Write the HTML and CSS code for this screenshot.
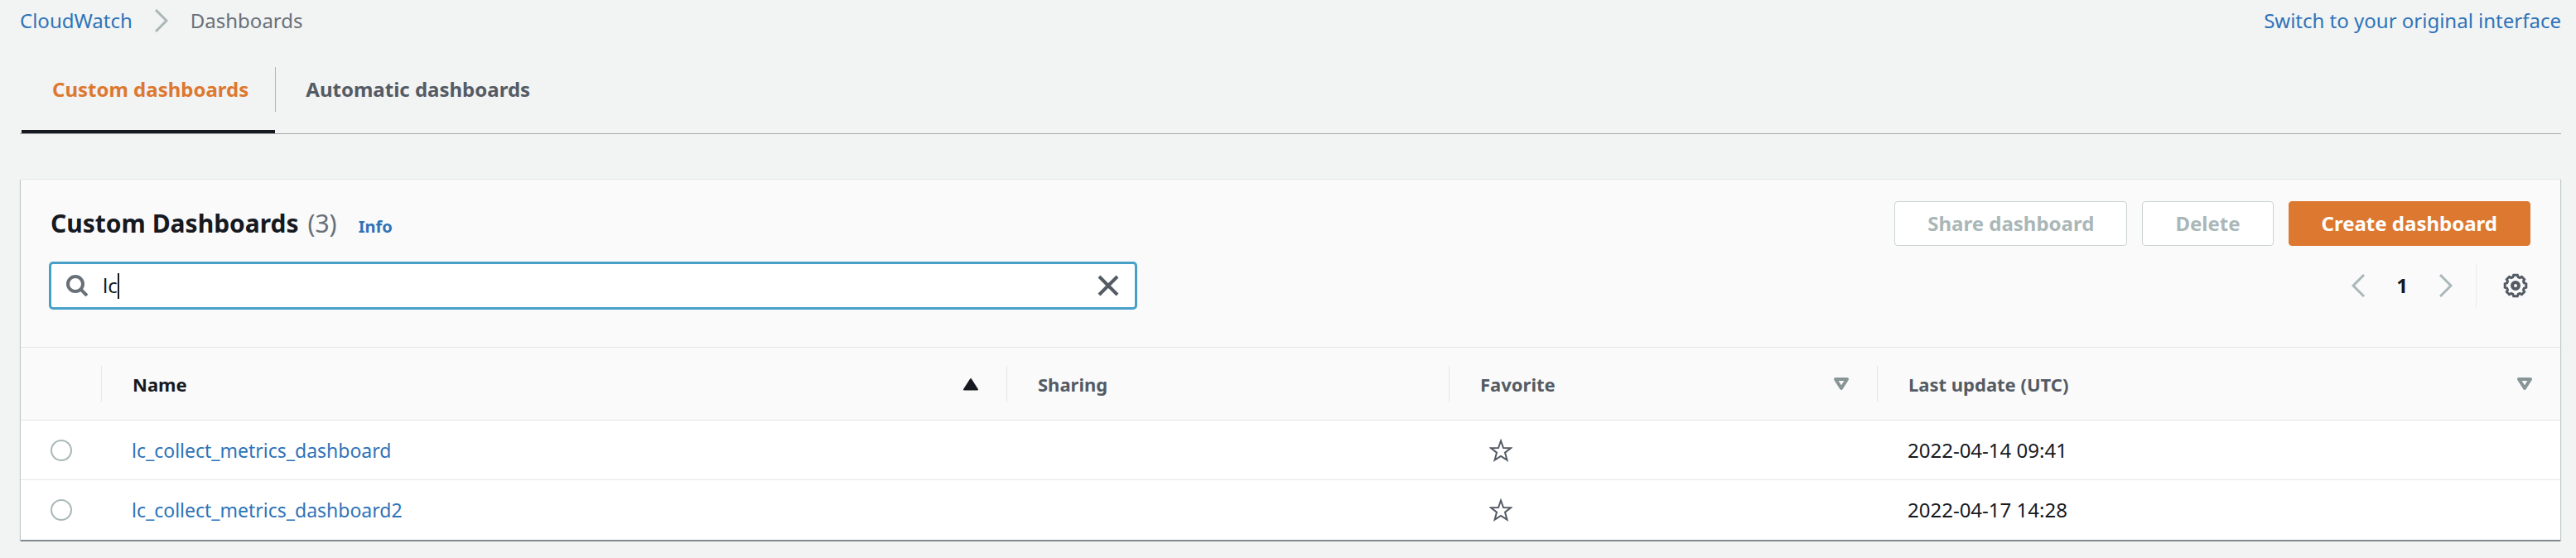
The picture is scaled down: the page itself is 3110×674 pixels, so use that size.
FILE: index.html
```html
<!DOCTYPE html>
<html lang="en">
<head>
<meta charset="utf-8">
<title>CloudWatch Dashboards</title>
<link rel="stylesheet" href="styles.css">
</head>
<body>
<header class="topbar">
  <nav class="breadcrumbs" aria-label="Breadcrumbs">
    <a class="link" href="#">CloudWatch</a>
    <svg class="chevron" viewBox="0 0 16 28" aria-hidden="true"><path d="M1 1l13 13L1 27"/></svg>
    <span class="current">Dashboards</span>
  </nav>
  <a class="link" href="#">Switch to your original interface</a>
</header>
<div class="tabs" role="tablist">
  <button class="tab active" role="tab" aria-selected="true">Custom dashboards</button>
  <button class="tab" role="tab" aria-selected="false">Automatic dashboards</button>
</div>
<main class="panel">
  <div class="panel-head">
    <div class="title-row">
      <div class="heading">
        <h1 class="title">Custom Dashboards <span class="count">(3)</span></h1>
        <a class="info" href="#">Info</a>
      </div>
      <div class="actions">
        <button class="btn" disabled>Share dashboard</button>
        <button class="btn" disabled>Delete</button>
        <button class="btn primary">Create dashboard</button>
      </div>
    </div>
    <div class="filter-row">
      <div class="search">
        <svg class="search-icon" viewBox="0 0 26 26" aria-hidden="true"><circle cx="11" cy="11" r="9"/><path d="M17 17l8 8"/></svg>
        <input class="search-input" type="text" aria-label="Find dashboards" value="lc">
        <span class="caret"></span>
        <button class="icon-btn" aria-label="Clear"><svg class="clear-icon" viewBox="0 0 26 26"><path d="M2 2l22 22M24 2L2 24"/></svg></button>
      </div>
      <div class="paging">
        <button class="icon-btn" aria-label="Previous page"><svg class="chevron" viewBox="0 0 16 28"><path d="M15 1L2 14l13 13"/></svg></button>
        <button class="page">1</button>
        <button class="icon-btn" aria-label="Next page"><svg class="chevron" viewBox="0 0 16 28"><path d="M1 1l13 13L1 27"/></svg></button>
        <span class="rule"></span>
        <button class="icon-btn" aria-label="Preferences"><svg class="gear" viewBox="0 0 30 30"><path d="M12.700 2.200h4.600L18.200 4.700 20.100 5.500 22.500 4.300 25.700 7.500 24.500 9.900 25.300 11.800 27.800 12.700V17.300L25.300 18.200 24.500 20.100 25.700 22.500 22.500 25.700 20.100 24.500 18.200 25.300 17.300 27.800H12.700L11.800 25.300 9.900 24.500 7.500 25.700 4.300 22.500 5.500 20.100 4.700 18.200 2.200 17.300V12.700L4.700 11.800 5.500 9.900 4.300 7.500 7.500 4.300 9.900 5.500 11.800 4.700z"/><circle class="hub" cx="15" cy="15" r="4"/></svg></button>
      </div>
    </div>
  </div>
  <table class="grid">
    <colgroup><col class="c-pick"><col class="c-name"><col class="c-share"><col class="c-fav"><col class="c-date"></colgroup>
    <thead>
      <tr>
        <th aria-label="Selection"><div class="cell"></div></th>
        <th class="sorted"><div class="cell">Name<svg class="sort" viewBox="0 0 20 16"><path class="solid" d="M10 2l8 12.500H2z"/></svg></div></th>
        <th><div class="cell">Sharing</div></th>
        <th><div class="cell">Favorite<svg class="sort" viewBox="0 0 20 16"><path d="M3 2h14l-7 11z"/></svg></div></th>
        <th><div class="cell">Last update (UTC)<svg class="sort" viewBox="0 0 20 16"><path d="M3 2h14l-7 11z"/></svg></div></th>
      </tr>
    </thead>
    <tbody>
      <tr>
        <td><input class="radio" type="radio" name="pick" aria-label="Select lc_collect_metrics_dashboard"></td>
        <td><a class="link" href="#">lc_collect_metrics_dashboard</a></td>
        <td></td>
        <td><button class="icon-btn fav" aria-label="Favorite"><svg class="star" viewBox="0 0 28 28"><path d="M14 2.500l3 8.500 9 .2-7 5.500 2.500 9L14 21l-7.500 4.700 2.500-9-7-5.500 9-.2z"/></svg></button></td>
        <td class="date">2022-04-14 09:41</td>
      </tr>
      <tr>
        <td><input class="radio" type="radio" name="pick" aria-label="Select lc_collect_metrics_dashboard2"></td>
        <td><a class="link" href="#">lc_collect_metrics_dashboard2</a></td>
        <td></td>
        <td><button class="icon-btn fav" aria-label="Favorite"><svg class="star" viewBox="0 0 28 28"><path d="M14 2.500l3 8.500 9 .2-7 5.500 2.500 9L14 21l-7.500 4.700 2.500-9-7-5.500 9-.2z"/></svg></button></td>
        <td class="date">2022-04-17 14:28</td>
      </tr>
    </tbody>
  </table>
</main>
</body>
</html>
```
FILE: styles.css
```css
* { box-sizing: border-box; }
body {
  margin: 0;
  padding: 0 18px 0 24px;
  background: #f2f3f3;
  color: #16191f;
  font: 24px/36px "Noto Sans", "Open Sans", sans-serif;
}
button, input { font: inherit; color: inherit; }
svg { display: block; fill: none; stroke: currentColor; }
.link { color: #2e73b8; text-decoration: none; }

.topbar { display: flex; justify-content: space-between; padding-top: 7px; }
.breadcrumbs { display: flex; align-items: center; gap: 27px; }
.current { color: #687078; }
.chevron { width: 16px; height: 28px; color: #aab7b8; stroke-width: 3; }

.tabs { display: flex; margin-top: 38px; padding-left: 2px; height: 81px; border-bottom: 1px solid #a3abab; }
.tab {
  position: relative;
  padding: 0 32px 26px 37px;
  border: 0;
  background: none;
  color: #545b64;
  font-weight: 700;
}
.tab.active { color: #dd7830; border-bottom: 4px solid #16191f; padding-bottom: 22px; }
.tab.active::after { content: ""; position: absolute; right: -1px; top: 0; width: 1px; height: 54px; background: #aab7b8; }

.panel {
  margin: 55px 1px 0;
  background: #fff;
  border-bottom: 2px solid #7d8b8e;
  box-shadow: 0 1px 1px #aab7b8, 1px 0 1px #c3cccc, -1px 0 1px #c3cccc;
}
.panel-head { padding: 26px 36px 45px 34px; background: #fafafa; }
.title-row, .filter-row { display: flex; justify-content: space-between; align-items: center; }
.heading { display: flex; align-items: baseline; gap: 26px; padding-left: 2px; }
.title { margin: 0; font-size: 30px; line-height: 44px; }
.count { margin-left: 3px; color: #687078; font-weight: 400; }
.info { color: #2e73b8; font-size: 20px; font-weight: 700; text-decoration: none; }
.actions { display: flex; gap: 18px; }
.btn {
  height: 54px;
  padding: 0 39px;
  border: 1px solid #ccd3d3;
  border-radius: 4px;
  background: #fff;
  color: #aab7b8;
  font-weight: 700;
}
.btn.primary { border-color: #dd7830; background: #dd7830; color: #fff; }

.filter-row { margin-top: 19px; }
.search {
  position: relative;
  display: flex;
  align-items: center;
  width: 44%;
  max-width: 1314px;
  height: 58px;
  padding: 0 19px 0 18px;
  border: 3px solid #48a0c8;
  border-radius: 5px;
  background: #fff;
}
.search-icon { width: 26px; height: 26px; color: #687078; stroke-width: 4; }
.search-input { flex: 1; min-width: 0; padding: 0 0 0 18px; border: 0; outline: 0; background: none; }
.caret { position: absolute; left: 80px; top: 11px; width: 2px; height: 31px; background: #16191f; }
.icon-btn { padding: 0; border: 0; background: none; }
.clear-icon { width: 26px; height: 26px; color: #545b64; stroke-width: 4; }
.paging { display: flex; align-items: center; padding-right: 3px; }
.page { padding: 0; border: 0; margin: 0 38px; background: none; font-weight: 700; }
.rule { width: 1px; height: 54px; margin: 0 32px 0 28px; background: #eaeded; }
.gear { width: 30px; height: 30px; color: #545b64; stroke-width: 3; }
.hub { stroke-width: 4; }

.grid { width: 100%; border-collapse: collapse; table-layout: fixed; font-size: 23px; }
.c-pick { width: 98px; }
.c-name { width: 1093px; }
.c-share { width: 534px; }
.c-fav { width: 517px; }
.grid th { height: 88px; padding: 0; border-top: 1px solid #e4e7e7; border-bottom: 1px solid #e4e7e7; background: #fafafa; color: #545b64; font-size: 22px; text-align: left; }
.grid th.sorted { color: #16191f; }
.cell { display: flex; justify-content: space-between; align-items: center; height: 43px; padding: 0 33px 0 37px; border-right: 1px solid #e4e7e7; }
th:last-child .cell { border-right: 0; }
.sort { width: 20px; height: 16px; color: #879596; stroke-width: 4; stroke-linejoin: round; }
.sorted .sort { color: #16191f; stroke-width: 2; }
.solid { fill: currentColor; }
.grid td { height: 72px; padding: 0 36px; border-bottom: 1px solid #e4e7e7; }
.grid tbody tr:last-child td { border-bottom: 0; }
.grid .date { font-size: 24px; }
.radio { appearance: none; display: block; width: 26px; height: 26px; margin: 0; border: 2px solid #aab7b8; border-radius: 50%; background: #fff; }
.fav { display: block; padding-left: 12px; }
.star { width: 28px; height: 28px; color: #545b64; stroke-width: 2; }
```
